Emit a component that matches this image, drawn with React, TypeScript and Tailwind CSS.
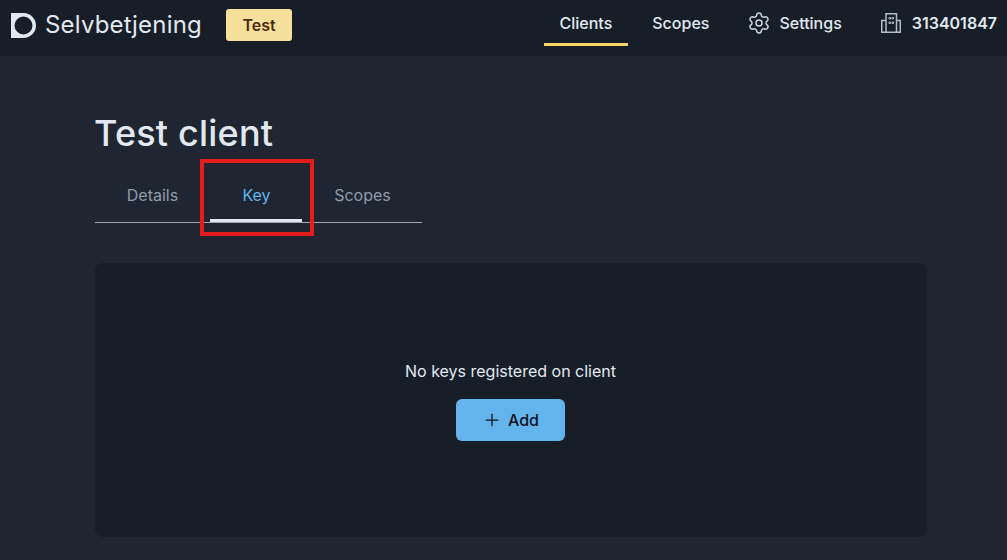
import { Settings, Plus } from "lucide-react";

function NavItem({ active, children }: { active?: boolean; children: React.ReactNode }) {
  return (
    <div className={`flex h-[46px] items-center gap-[11px] px-4 pt-[2px] text-[16px] font-medium border-b-[3px] ${active ? "border-[#f6d365]" : "border-transparent"} text-[#e2e8f0]`}>
      {children}
    </div>
  );
}

function Tab({ active, children, w }: { active?: boolean; children: React.ReactNode; w: string }) {
  return (
    <div className={`flex h-[52px] items-center justify-center pt-[1px] text-[16px] border-b-[3px] ${w} ${active ? "border-[#e2e8f0] text-[#63b3ed]" : "border-transparent text-[#8f9bab]"}`}>
      {children}
    </div>
  );
}

export default function App() {
  return (
    <div className="relative h-[560px] w-[1007px] overflow-hidden bg-[#1f2631] font-['Inter',sans-serif] text-[#e2e8f0]">
      <header className="flex h-[56px] items-start justify-between bg-[#171e28] pl-[11px] pr-[10px]">
        <div className="flex h-[50px] items-center">
          <svg width="25" height="25" viewBox="0 0 25 25" className="shrink-0">
            <path fillRule="evenodd" fill="#e2e8f0" d="M0 0H12.5A12.5 12.5 0 0 1 12.5 25H0ZM12.5 3.5A9 9 0 1 0 12.5 21.5A9 9 0 1 0 12.5 3.5Z" />
          </svg>
          <span className="ml-[9px] text-[24px] leading-none tracking-[0.2px] text-[#e2e8f0]">Selvbetjening</span>
          <span className="ml-[24px] flex h-[32px] w-[66px] items-center justify-center rounded-[3px] bg-[#f7df9c] text-[16px] font-semibold text-[#4a2c0a]">Test</span>
        </div>
        <nav className="flex items-start">
          <div className="flex items-start gap-[8px] pr-[9px]">
            <NavItem active>Clients</NavItem>
            <NavItem>Scopes</NavItem>
            <NavItem><Settings size={24} strokeWidth={1.5} className="-ml-[2px] -mr-[3px] text-[#cbd5e0]" />Settings</NavItem>
          </div>
          <div className="flex h-[46px] items-center gap-[11px] pb-[1px] pl-[14px] text-[16px] font-semibold">
            <svg width="20" height="20" viewBox="0 0 20 20" fill="none" stroke="#b4bcc8" strokeWidth="1.5" className="shrink-0">
              <path d="M5 19.25V.75H15.5V19.25Z" />
              <path d="M5 7.5H.75V19.25H5M15.5 7.5H19.25V19.25H15.5" />
              <path d="M8 4.5H9.5V6H8ZM11 4.5H12.5V6H11ZM8 9H9.5V10.5H8ZM11 9H12.5V10.5H11Z" strokeWidth="1" />
            </svg>
            313401847
          </div>
        </nav>
      </header>
      <main className="pl-[95px] pr-[80px] pt-[55px]">
        <h1 className="-ml-px text-[36px] font-medium leading-[44px] tracking-[0.2px] text-[#e2e8f0]">Test client</h1>
        <div className="mt-[15px] flex w-[327px] border-b border-[#a0a6b0]">
          <Tab w="w-[115px]">Details</Tab>
          <Tab active w="w-[92px] pl-[1px]">Key</Tab>
          <Tab w="w-[120px] pl-[1px]">Scopes</Tab>
        </div>
        <section className="mt-[40px] flex h-[274px] flex-col items-center justify-center rounded-lg bg-[#171e28] pr-[1px]">
          <p className="text-[16px] leading-6 text-[#e2e8f0]">No keys registered on client</p>
          <button className="mt-[16px] flex h-[42px] w-[109px] items-center justify-center gap-[6px] rounded-md bg-[#63b3ed] text-[16px] font-medium text-[#0f141c]">
            <Plus size={20} strokeWidth={1.5} />Add
          </button>
        </section>
      </main>
      <div className="absolute left-[200px] top-[159px] h-[77px] w-[114px] border-[4px] border-[#e51c1c]" />
    </div>
  );
}
